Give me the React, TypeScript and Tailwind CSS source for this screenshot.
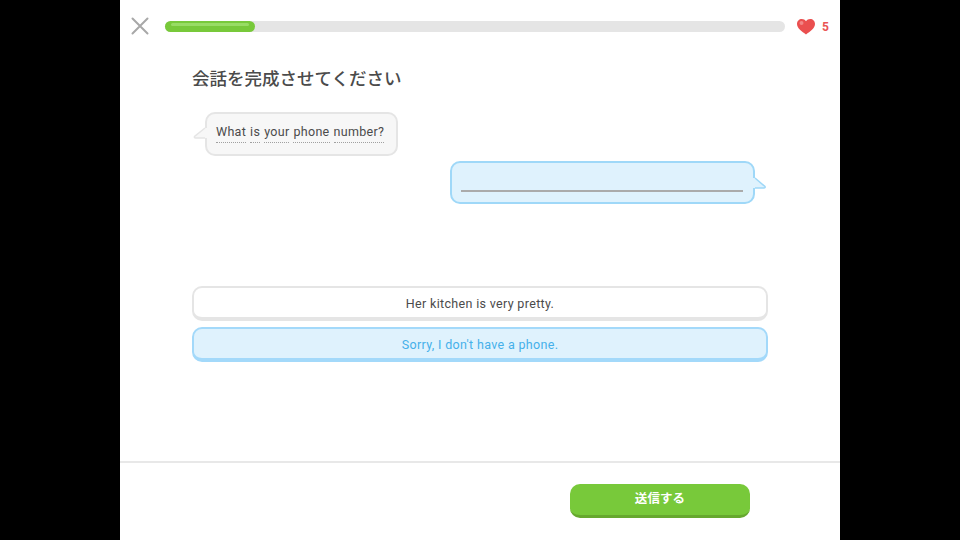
const words = ['What', 'is', 'your', 'phone', 'number?'];

export default function App() {
    return (
        <div className="w-[960px] h-[540px] bg-black flex justify-center font-['Roboto','Noto_Sans_CJK_JP',sans-serif]">
            <div className="w-[720px] h-full bg-white flex flex-col">
                {/* Top bar */}
                <div className="h-[53px] flex items-center pl-[10px] pr-[12px] pb-[1px]">
                    <svg width="20" height="20" viewBox="0 0 20 20" className="shrink-0">
                        <path d="M2.5 2.5 L17.5 17.5 M17.5 2.5 L2.5 17.5" stroke="#a8a8a8" strokeWidth="2" strokeLinecap="round" />
                    </svg>
                    <div className="ml-[15px] w-[620px] shrink-0 h-[11px] rounded-full bg-[#e5e5e5]">
                        <div className="relative w-[90px] h-full rounded-full bg-[#78c93a]">
                            <div className="absolute left-[6px] right-[6px] top-[2px] h-[3px] rounded-full bg-[#98dc64]"></div>
                        </div>
                    </div>
                    <svg width="20" height="18" viewBox="0 0 20 18" className="ml-[11px] mt-[1px] shrink-0">
                        <path d="M10 16.5 C6 13.5 1 10.5 1 6 C1 3 3.2 1 5.8 1 C7.6 1 9 1.8 10 3.2 C11 1.8 12.4 1 14.2 1 C16.8 1 19 3 19 6 C19 10.5 14 13.5 10 16.5 Z" fill="#ea4f4f" />
                        <circle cx="5.5" cy="5" r="2" fill="#f28585" />
                    </svg>
                    <span className="ml-[6px] mt-[1px] text-[12px] font-bold text-[#ea5555]">5</span>
                </div>

                {/* Exercise */}
                <div className="flex-1 px-[72px] flex flex-col">
                    <h1 className="mt-[14px] h-[24px] leading-[24px] text-[17.5px] font-medium text-[#4b4b4b]">会話を完成させてください</h1>

                    <div className="mt-[21px] ml-[13px] relative self-start h-[44px] pl-[9px] pr-[12px] rounded-[10px] border-2 border-[#e5e5e5] bg-[#f7f7f7] flex items-center gap-[4px]">
                        <svg width="14" height="14" viewBox="0 0 14 14" className="absolute left-[-14px] top-[13px]">
                            <path d="M14 1 L12 1 L1.5 9.5 Q1 11 2.5 11 L14 11 Z" fill="#f7f7f7" />
                            <path d="M12 1 L1.5 9.5 Q1 11 2.5 11 L12 11" fill="none" stroke="#e5e5e5" strokeWidth="1.5" />
                        </svg>
                        {words.map(word => (
                            <span key={word} className="text-[12.5px] leading-[16px] tracking-[0.3px] text-[#4b4b4b] border-b border-dotted border-[#a0a0a0] pb-[2px] mb-[2px]">
                                {word}
                            </span>
                        ))}
                    </div>

                    <div className="mt-[5px] ml-[258px] relative w-[305px] h-[43px] rounded-[10px] border-2 border-[#9fd8f8] bg-[#dff2fd] pl-[9px] pr-[10px] flex items-end pb-[10px]">
                        <div className="w-full h-[2px] bg-[#ababab]"></div>
                        <svg width="13" height="14" viewBox="0 0 13 14" className="absolute right-[-13px] top-[14px]">
                            <path d="M0 1 L2 1 L12 9.5 Q12.5 11 11 11 L0 11 Z" fill="#dff2fd" />
                            <path d="M2 1 L12 9.5 Q12.5 11 11 11 L2 11" fill="none" stroke="#9fd8f8" strokeWidth="1.5" />
                        </svg>
                    </div>

                    <div className="mt-[82px] flex flex-col gap-[6px]">
                        <button className="h-[35px] pt-[3px] rounded-[10px] border-2 border-b-[4px] border-[#e5e5e5] bg-white text-[12.5px] tracking-[0.33px] text-[#4b4b4b]">
                            Her kitchen is very pretty.
                        </button>
                        <button className="h-[35px] pt-[3px] rounded-[10px] border-2 border-b-[4px] border-[#a3d9fa] bg-[#dff2fd] text-[12.5px] tracking-[0.33px] text-[#45b0ea]">
                            Sorry, I don't have a phone.
                        </button>
                    </div>
                </div>

                {/* Footer */}
                <div className="h-[79px] border-t-2 border-[#e8e8e8] pt-[21px] pl-[450px]">
                    <button className="w-[180px] h-[34px] pb-[1px] rounded-[10px] border-b-[3px] border-[#66a82e] bg-[#78c93a] text-[12.5px] font-bold tracking-[0.1px] text-white">
                        送信する
                    </button>
                </div>
            </div>
        </div>
    );
}
